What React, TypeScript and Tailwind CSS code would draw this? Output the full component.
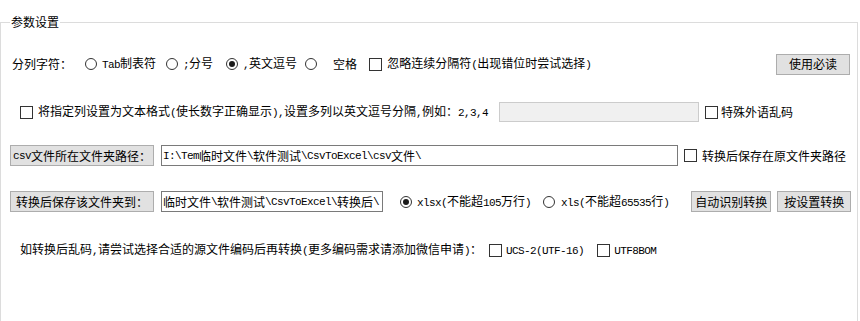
import React from "react";

const M = ({ children }: { children: React.ReactNode }) => (
  <span className="font-['Liberation_Mono','DejaVu_Sans_Mono',monospace] text-[11px] tracking-[-0.6px]">
    {children}
  </span>
);

const Radio = ({ checked = false, className = "" }: { checked?: boolean; className?: string }) => (
  <span
    className={
      "flex h-[12px] w-[12px] shrink-0 items-center justify-center rounded-full border border-[#333333] bg-white " +
      className
    }
  >
    {checked && <span className="block h-[6px] w-[6px] rounded-full bg-[#1a1a1a]" />}
  </span>
);

const Check = ({ className = "" }: { className?: string }) => (
  <span className={"block h-[13px] w-[13px] shrink-0 border border-[#333333] bg-white " + className} />
);

const Btn = ({ children, className = "" }: { children: React.ReactNode; className?: string }) => (
  <div
    className={
      "flex h-[21px] shrink-0 items-center justify-center whitespace-nowrap border border-[#adadad] bg-[#e1e1e1] text-black " +
      className
    }
  >
    {children}
  </div>
);

export default function App() {
  return (
    <div className="h-[321px] w-[860px] overflow-hidden bg-white font-['Noto_Sans_CJK_SC',sans-serif] text-[12px] leading-[14px] text-black">
      <div className="mt-[22px] h-[299px] w-[858px] border border-b-0 border-[#dcdcdc]">
        <span className="-mt-[8px] ml-[9px] block w-fit bg-white px-[1px] leading-[14px]">参数设置</span>

        {/* Row 1 */}
        <div className="mt-[25px] flex h-[20px] items-center whitespace-nowrap pl-[11px] pr-[7px]">
          <span>分列字符：</span>
          <Radio className="ml-[13px]" />
          <span className="ml-[5px]">
            <M>Tab</M>制表符
          </span>
          <Radio className="ml-[10px]" />
          <span className="ml-[5px]">
            <M>;</M>分号
          </span>
          <Radio checked className="ml-[13px]" />
          <span className="ml-[5px]">
            <M>,</M>英文逗号
          </span>
          <Radio className="ml-[8px]" />
          <span className="ml-[16px]">空格</span>
          <Check className="ml-[12px]" />
          <span className="ml-[5px]">
            忽略连续分隔符<M>(</M>出现错位时尝试选择<M>)</M>
          </span>
          <Btn className="ml-auto h-[20px] w-[74px]">使用必读</Btn>
        </div>

        {/* Row 2 */}
        <div className="mt-[28px] flex h-[20px] items-center whitespace-nowrap pl-[19px]">
          <Check />
          <span className="ml-[5px] w-[461px]">
            将指定列设置为文本格式<M>(</M>使长数字正确显示<M>),</M>设置多列以英文逗号分隔<M>,</M>例如：<M>2,3,4</M>
          </span>
          <div className="h-[20px] w-[200px] border border-[#cccccc] bg-[#f0f0f0]" />
          <Check className="ml-[6px]" />
          <span className="ml-[3px]">特殊外语乱码</span>
        </div>

        {/* Row 3 */}
        <div className="mt-[23px] flex h-[21px] items-center whitespace-nowrap pl-[9px]">
          <Btn className="w-[144px]">
            <M>csv</M>文件所在文件夹路径：
          </Btn>
          <div className="ml-[7px] flex h-[21px] w-[517px] items-center border border-[#7a7a7a] bg-white pl-[1px]">
            <M>I:\Tem</M>临时文件<M>\</M>软件测试<M>\CsvToExcel\csv</M>文件<M>\</M>
          </div>
          <Check className="ml-[6px]" />
          <span className="ml-[5px]">转换后保存在原文件夹路径</span>
        </div>

        {/* Row 4 */}
        <div className="mt-[25px] flex h-[21px] items-center whitespace-nowrap pl-[9px]">
          <Btn className="w-[144px]">转换后保存该文件夹到：</Btn>
          <div className="ml-[7px] flex h-[21px] w-[222px] items-center overflow-hidden border border-[#7a7a7a] bg-white pl-[1px]">
            临时文件<M>\</M>软件测试<M>\CsvToExcel\</M>转换后<M>\</M>
          </div>
          <Radio checked className="ml-[17px]" />
          <span className="ml-[5px]">
            <M>xlsx(</M>不能超<M>105</M>万行<M>)</M>
          </span>
          <Radio className="ml-[12px]" />
          <span className="ml-[6px]">
            <M>xls(</M>不能超<M>65535</M>行<M>)</M>
          </span>
          <Btn className="ml-[22px] w-[80px]">自动识别转换</Btn>
          <Btn className="ml-[6px] w-[74px]">按设置转换</Btn>
        </div>

        {/* Row 5 */}
        <div className="mt-[31px] flex h-[14px] items-center whitespace-nowrap pl-[19px]">
          <span>
            如转换后乱码<M>,</M>请尝试选择合适的源文件编码后再转换<M>(</M>更多编码需求请添加微信申请<M>)</M>：
          </span>
          <Check className="ml-[7px]" />
          <span className="ml-[4px]">
            <M>UCS-2(UTF-16)</M>
          </span>
          <Check className="ml-[13px]" />
          <span className="ml-[4px]">
            <M>UTF8BOM</M>
          </span>
        </div>
      </div>
    </div>
  );
}
